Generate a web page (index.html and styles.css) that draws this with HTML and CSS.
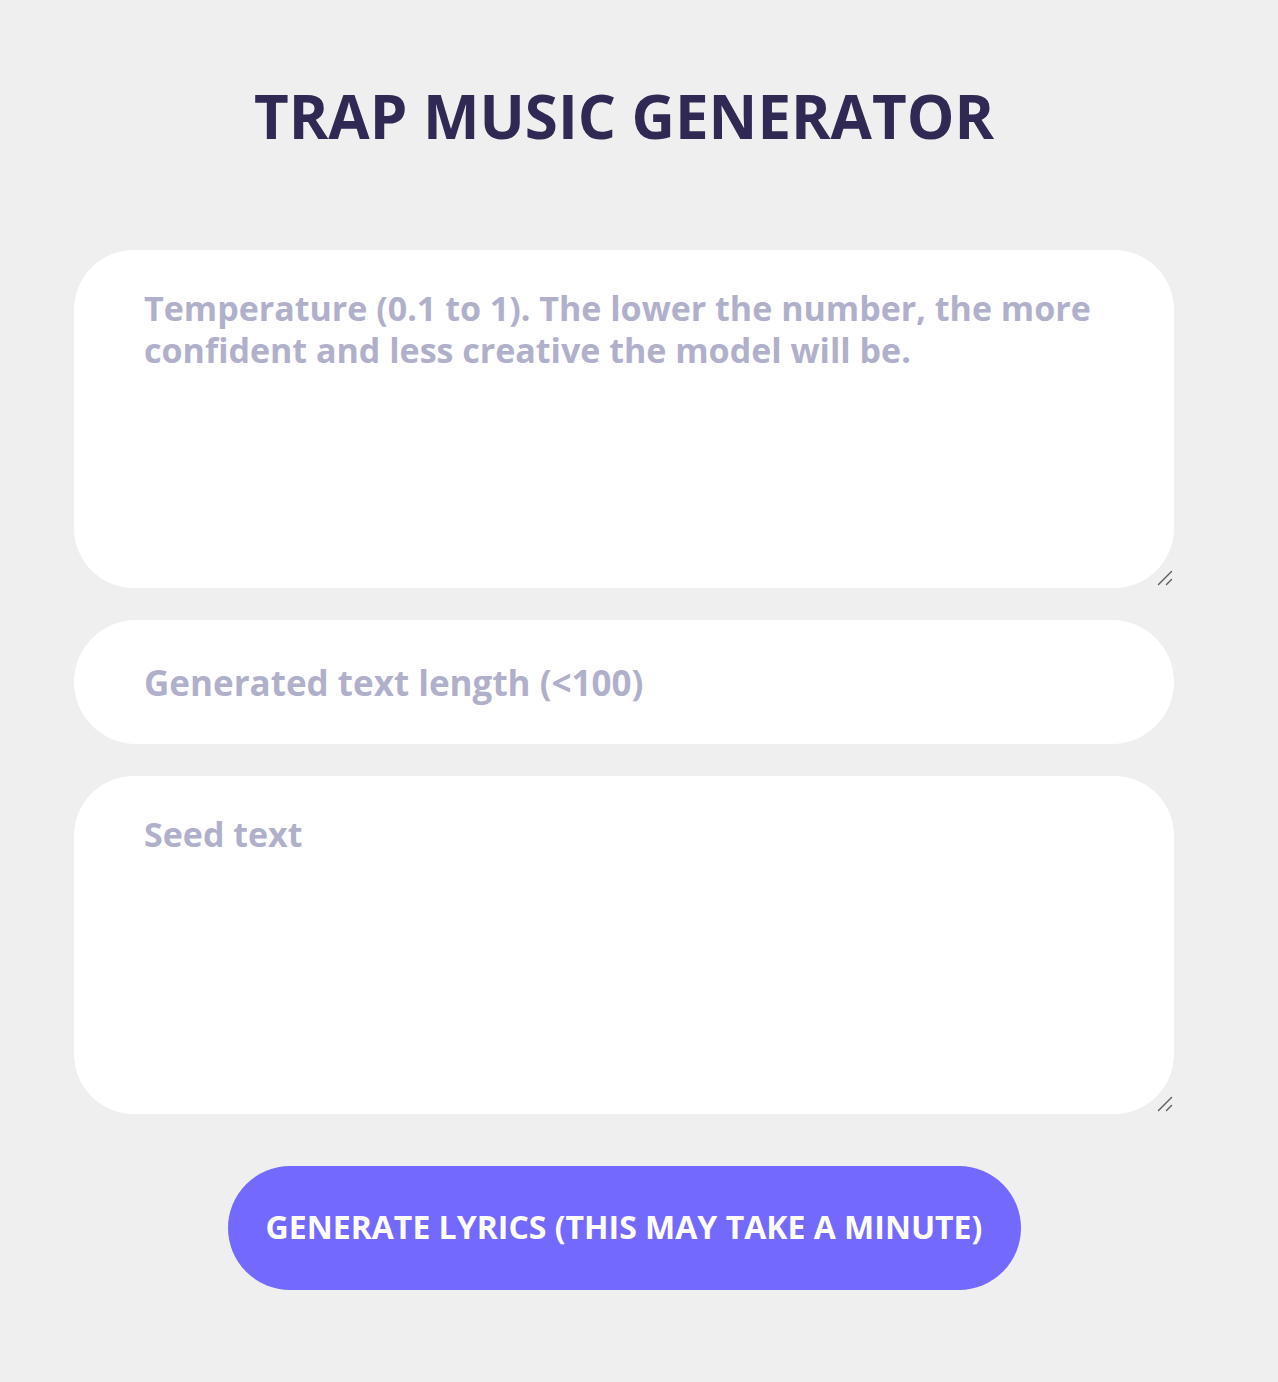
FILE: index.html
```html
<!DOCTYPE html>
<html lang="en">
<head>
<meta charset="utf-8">
<title>Trap Music Generator</title>
<link rel="stylesheet" href="styles.css">
</head>
<body>
<main class="page">
  <h1 class="title">TRAP MUSIC GENERATOR</h1>
  <form class="form">
    <div class="area-wrap">
      <textarea class="field field-area" placeholder="Temperature (0.1 to 1). The lower the number, the more confident and less creative the model will be."></textarea>
      <svg class="grip" width="16" height="16" viewBox="0 0 16 16" aria-hidden="true"><path d="M1.5 14.5 L14.5 1.5 M9.5 14.5 L14.5 9.5" stroke="#5a5a5a" stroke-width="1.4" stroke-linecap="round" fill="none"/></svg>
    </div>
    <input class="field field-input" type="text" placeholder="Generated text length (<100)">
    <div class="area-wrap">
      <textarea class="field field-area" placeholder="Seed text"></textarea>
      <svg class="grip" width="16" height="16" viewBox="0 0 16 16" aria-hidden="true"><path d="M1.5 14.5 L14.5 1.5 M9.5 14.5 L14.5 9.5" stroke="#5a5a5a" stroke-width="1.4" stroke-linecap="round" fill="none"/></svg>
    </div>
    <button class="btn" type="button">GENERATE LYRICS (THIS MAY TAKE A MINUTE)</button>
  </form>
</main>
</body>
</html>
```

FILE: styles.css
```css
html, body {
  margin: 0;
  padding: 0;
  background: #efefef;
}
body {
  font-family: "Open Sans", "Noto Sans", sans-serif;
}
.page {
  width: 1100px;
  margin: 0 0 0 74px;
  padding-top: 76px;
  display: flex;
  flex-direction: column;
  align-items: stretch;
}
.title {
  margin: 0;
  text-align: center;
  font-size: 60px;
  line-height: 80px;
  font-weight: 700;
  color: #2f2953;
}
.form {
  margin-top: 94px;
  display: flex;
  flex-direction: column;
  gap: 32px;
}
.area-wrap {
  position: relative;
}
.grip {
  position: absolute;
  right: 1px;
  bottom: 2px;
}
.field {
  box-sizing: border-box;
  width: 1100px;
  border: none;
  outline: none;
  background: #ffffff;
  font-family: "Open Sans", "Noto Sans", sans-serif;
  font-weight: 700;
  font-size: 34px;
  color: #2f2953;
  padding: 0 50px 0 70px;
  margin: 0;
}
.field::placeholder {
  color: #b1b0cb;
  opacity: 1;
}
.field-area {
  height: 338px;
  border-radius: 60px;
  padding-top: 37px;
  padding-bottom: 37px;
  line-height: 42px;
  resize: none;
  display: block;
}
.field-input {
  height: 124px;
  border-radius: 62px;
  font-size: 35px;
}
.btn {
  align-self: center;
  margin-top: 20px;
  width: 793px;
  height: 124px;
  border: none;
  border-radius: 62px;
  background: #7469ff;
  color: #ffffff;
  font-family: "Open Sans", "Noto Sans", sans-serif;
  font-weight: 700;
  font-size: 32px;
  padding: 0 0 4px;
  cursor: pointer;
}
```
